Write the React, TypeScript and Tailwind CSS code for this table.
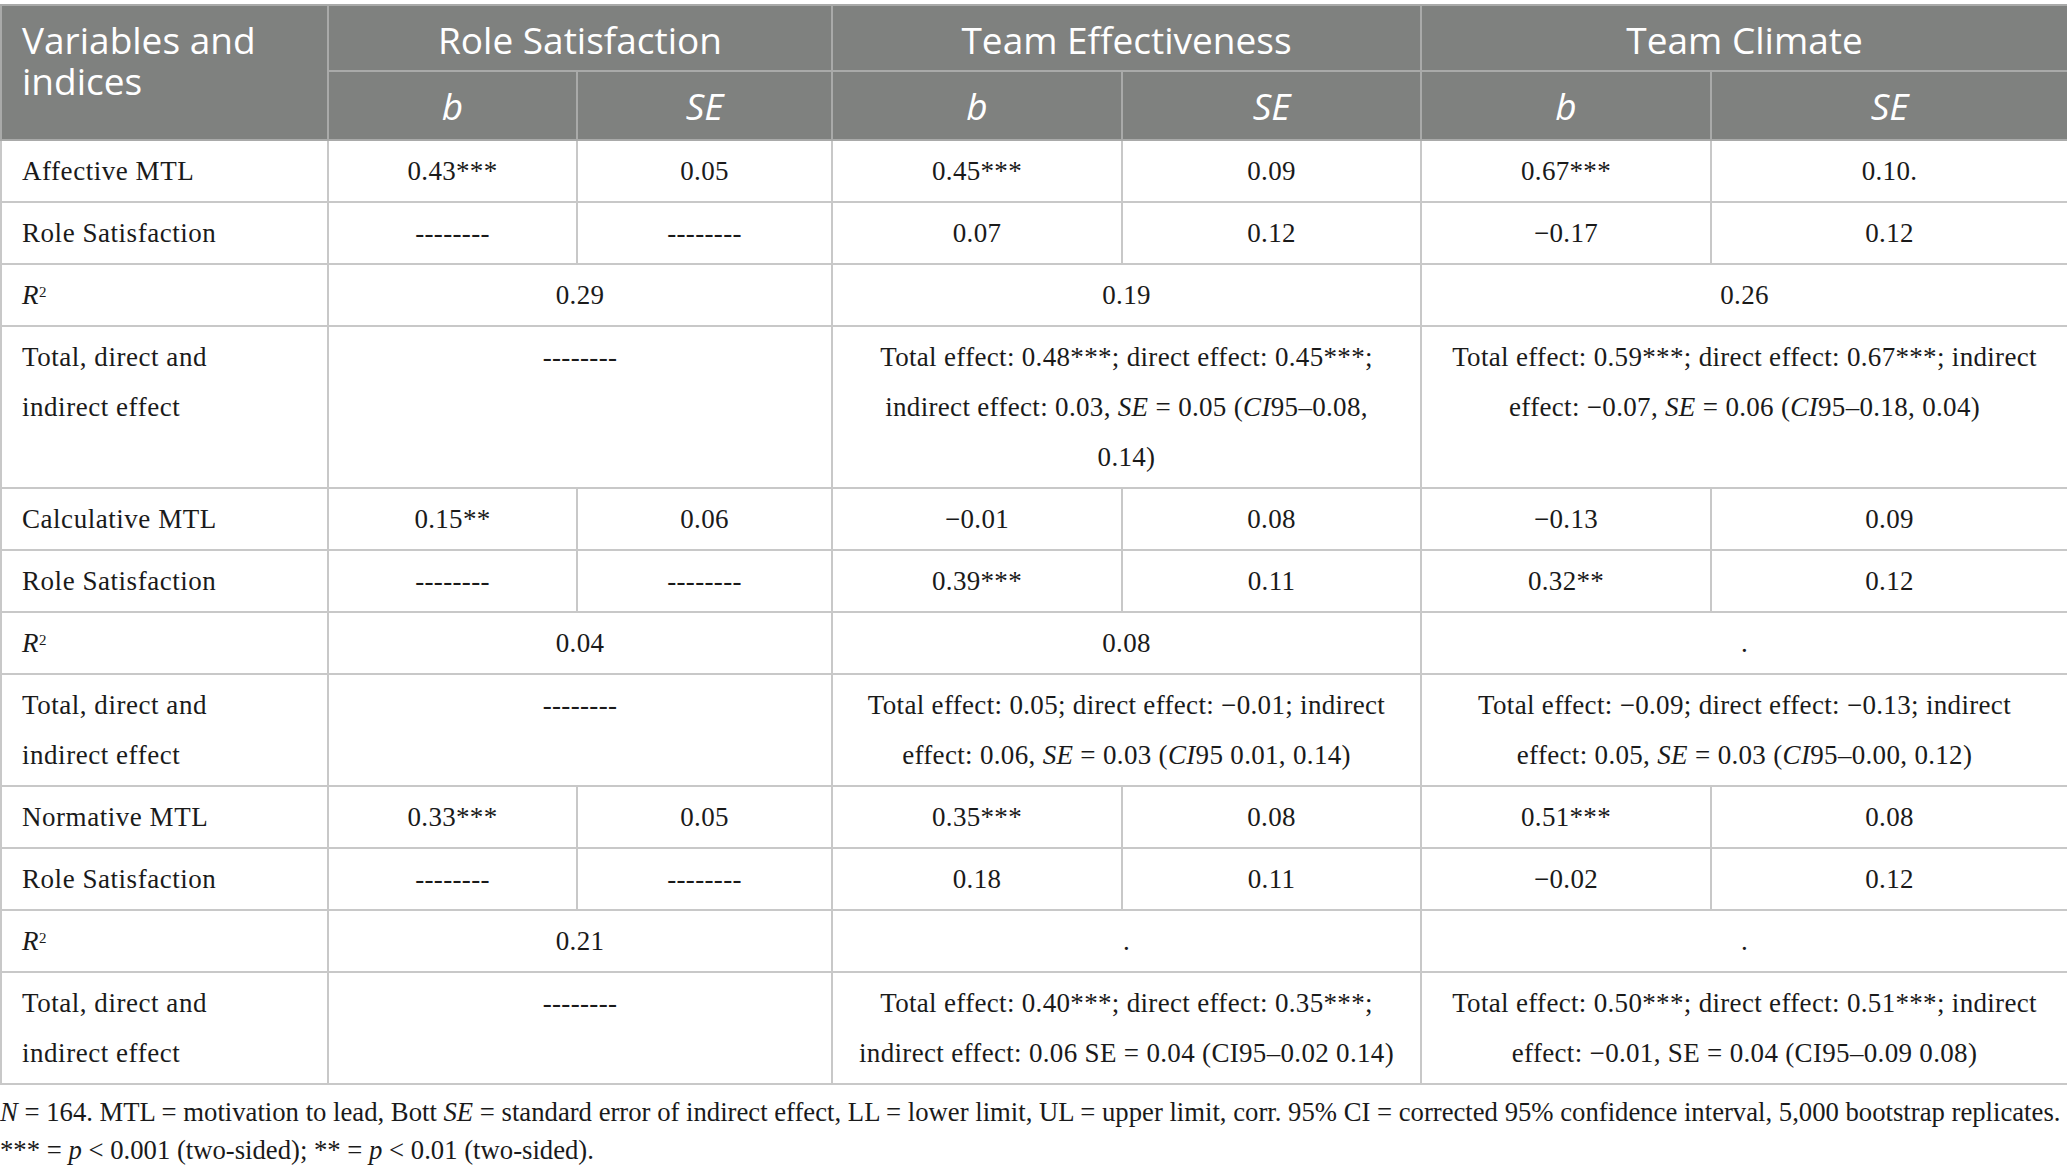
import type { ReactNode } from 'react'

const serif = "font-['Liberation_Serif','Times_New_Roman',serif]"

type Cell = { content: ReactNode; span?: number }
type Row = { label: ReactNode; cells: Cell[] }

const dash = '--------'

const R2 = (
  <>
    <i>R</i>
    <sup className="text-[15px]">2</sup>
  </>
)

const totalLabel = (
  <>
    Total, direct and
    <br />
    indirect effect
  </>
)

const rows: Row[] = [
  {
    label: 'Affective MTL',
    cells: [
      { content: '0.43***' },
      { content: '0.05' },
      { content: '0.45***' },
      { content: '0.09' },
      { content: '0.67***' },
      { content: '0.10.' },
    ],
  },
  {
    label: 'Role Satisfaction',
    cells: [
      { content: dash },
      { content: dash },
      { content: '0.07' },
      { content: '0.12' },
      { content: '−0.17' },
      { content: '0.12' },
    ],
  },
  {
    label: R2,
    cells: [
      { content: '0.29', span: 2 },
      { content: '0.19', span: 2 },
      { content: '0.26', span: 2 },
    ],
  },
  {
    label: totalLabel,
    cells: [
      { content: dash, span: 2 },
      {
        span: 2,
        content: (
          <>
            Total effect: 0.48***; direct effect: 0.45***;
            <br />
            indirect effect: 0.03, <i>SE</i> = 0.05 (<i>CI</i>95–0.08,
            <br />
            0.14)
          </>
        ),
      },
      {
        span: 2,
        content: (
          <>
            Total effect: 0.59***; direct effect: 0.67***; indirect
            <br />
            effect: −0.07, <i>SE</i> = 0.06 (<i>CI</i>95–0.18, 0.04)
          </>
        ),
      },
    ],
  },
  {
    label: 'Calculative MTL',
    cells: [
      { content: '0.15**' },
      { content: '0.06' },
      { content: '−0.01' },
      { content: '0.08' },
      { content: '−0.13' },
      { content: '0.09' },
    ],
  },
  {
    label: 'Role Satisfaction',
    cells: [
      { content: dash },
      { content: dash },
      { content: '0.39***' },
      { content: '0.11' },
      { content: '0.32**' },
      { content: '0.12' },
    ],
  },
  {
    label: R2,
    cells: [
      { content: '0.04', span: 2 },
      { content: '0.08', span: 2 },
      { content: '.', span: 2 },
    ],
  },
  {
    label: totalLabel,
    cells: [
      { content: dash, span: 2 },
      {
        span: 2,
        content: (
          <>
            Total effect: 0.05; direct effect: −0.01; indirect
            <br />
            effect: 0.06, <i>SE</i> = 0.03 (<i>CI</i>95 0.01, 0.14)
          </>
        ),
      },
      {
        span: 2,
        content: (
          <>
            Total effect: −0.09; direct effect: −0.13; indirect
            <br />
            effect: 0.05, <i>SE</i> = 0.03 (<i>CI</i>95–0.00, 0.12)
          </>
        ),
      },
    ],
  },
  {
    label: 'Normative MTL',
    cells: [
      { content: '0.33***' },
      { content: '0.05' },
      { content: '0.35***' },
      { content: '0.08' },
      { content: '0.51***' },
      { content: '0.08' },
    ],
  },
  {
    label: 'Role Satisfaction',
    cells: [
      { content: dash },
      { content: dash },
      { content: '0.18' },
      { content: '0.11' },
      { content: '−0.02' },
      { content: '0.12' },
    ],
  },
  {
    label: R2,
    cells: [
      { content: '0.21', span: 2 },
      { content: '.', span: 2 },
      { content: '.', span: 2 },
    ],
  },
  {
    label: totalLabel,
    cells: [
      { content: dash, span: 2 },
      {
        span: 2,
        content: (
          <>
            Total effect: 0.40***; direct effect: 0.35***;
            <br />
            indirect effect: 0.06 SE = 0.04 (CI95–0.02 0.14)
          </>
        ),
      },
      {
        span: 2,
        content: (
          <>
            Total effect: 0.50***; direct effect: 0.51***; indirect
            <br />
            effect: −0.01, SE = 0.04 (CI95–0.09 0.08)
          </>
        ),
      },
    ],
  },
]

const bodyCell = 'border-2 border-[#c8c8c8] pt-[5px] pb-[5px] align-top leading-[50px] text-[27px]'
const headCell = 'border-2 border-[#a9aaa9] bg-[#7f817f] font-normal text-white'

export default function App() {
  return (
    <div className="min-h-screen bg-white pt-[4px] text-[#1a1a1a]">
      <table className={`w-[2067px] table-fixed border-collapse ${serif}`}>
        <colgroup>
          <col className="w-[327px]" />
          <col className="w-[249px]" />
          <col className="w-[255px]" />
          <col className="w-[290px]" />
          <col className="w-[299px]" />
          <col className="w-[290px]" />
          <col className="w-[357px]" />
        </colgroup>
        <thead className="font-['Open_Sans','Noto_Sans',sans-serif] text-[37px]">
          <tr className="h-[66px]">
            <th
              rowSpan={2}
              className={`${headCell} px-5 pt-[13px] text-left align-top leading-[41px]`}
            >
              Variables and
              <br />
              indices
            </th>
            <th colSpan={2} className={`${headCell} pt-[2px] leading-[41px]`}>
              Role Satisfaction
            </th>
            <th colSpan={2} className={`${headCell} pt-[2px] leading-[41px]`}>
              Team Effectiveness
            </th>
            <th colSpan={2} className={`${headCell} pt-[2px] leading-[41px]`}>
              Team Climate
            </th>
          </tr>
          <tr className="h-[69px]">
            {['b', 'SE', 'b', 'SE', 'b', 'SE'].map((t, i) => (
              <th key={i} className={`${headCell} italic leading-[41px]`}>
                {t}
              </th>
            ))}
          </tr>
        </thead>
        <tbody>
          {rows.map((row, i) => (
            <tr key={i}>
              <td className={`${bodyCell} px-5 text-left tracking-[0.02em]`}>{row.label}</td>
              {row.cells.map((cell, j) => (
                <td
                  key={j}
                  colSpan={cell.span}
                  className={`${bodyCell} px-2 text-center tracking-[0.012em]`}
                >
                  {cell.content}
                </td>
              ))}
            </tr>
          ))}
        </tbody>
      </table>
      <div className={`${serif} pt-[8px] text-[26.7px] leading-[38px] whitespace-nowrap`}>
        <p>
          <i>N</i> = 164. MTL = motivation to lead, Bott <i>SE</i> = standard error of indirect
          effect, LL = lower limit, UL = upper limit, corr. 95% CI = corrected 95% confidence
          interval, 5,000 bootstrap replicates.
        </p>
        <p>
          *** = <i>p</i> &lt; 0.001 (two-sided); ** = <i>p</i> &lt; 0.01 (two-sided).
        </p>
      </div>
    </div>
  )
}
